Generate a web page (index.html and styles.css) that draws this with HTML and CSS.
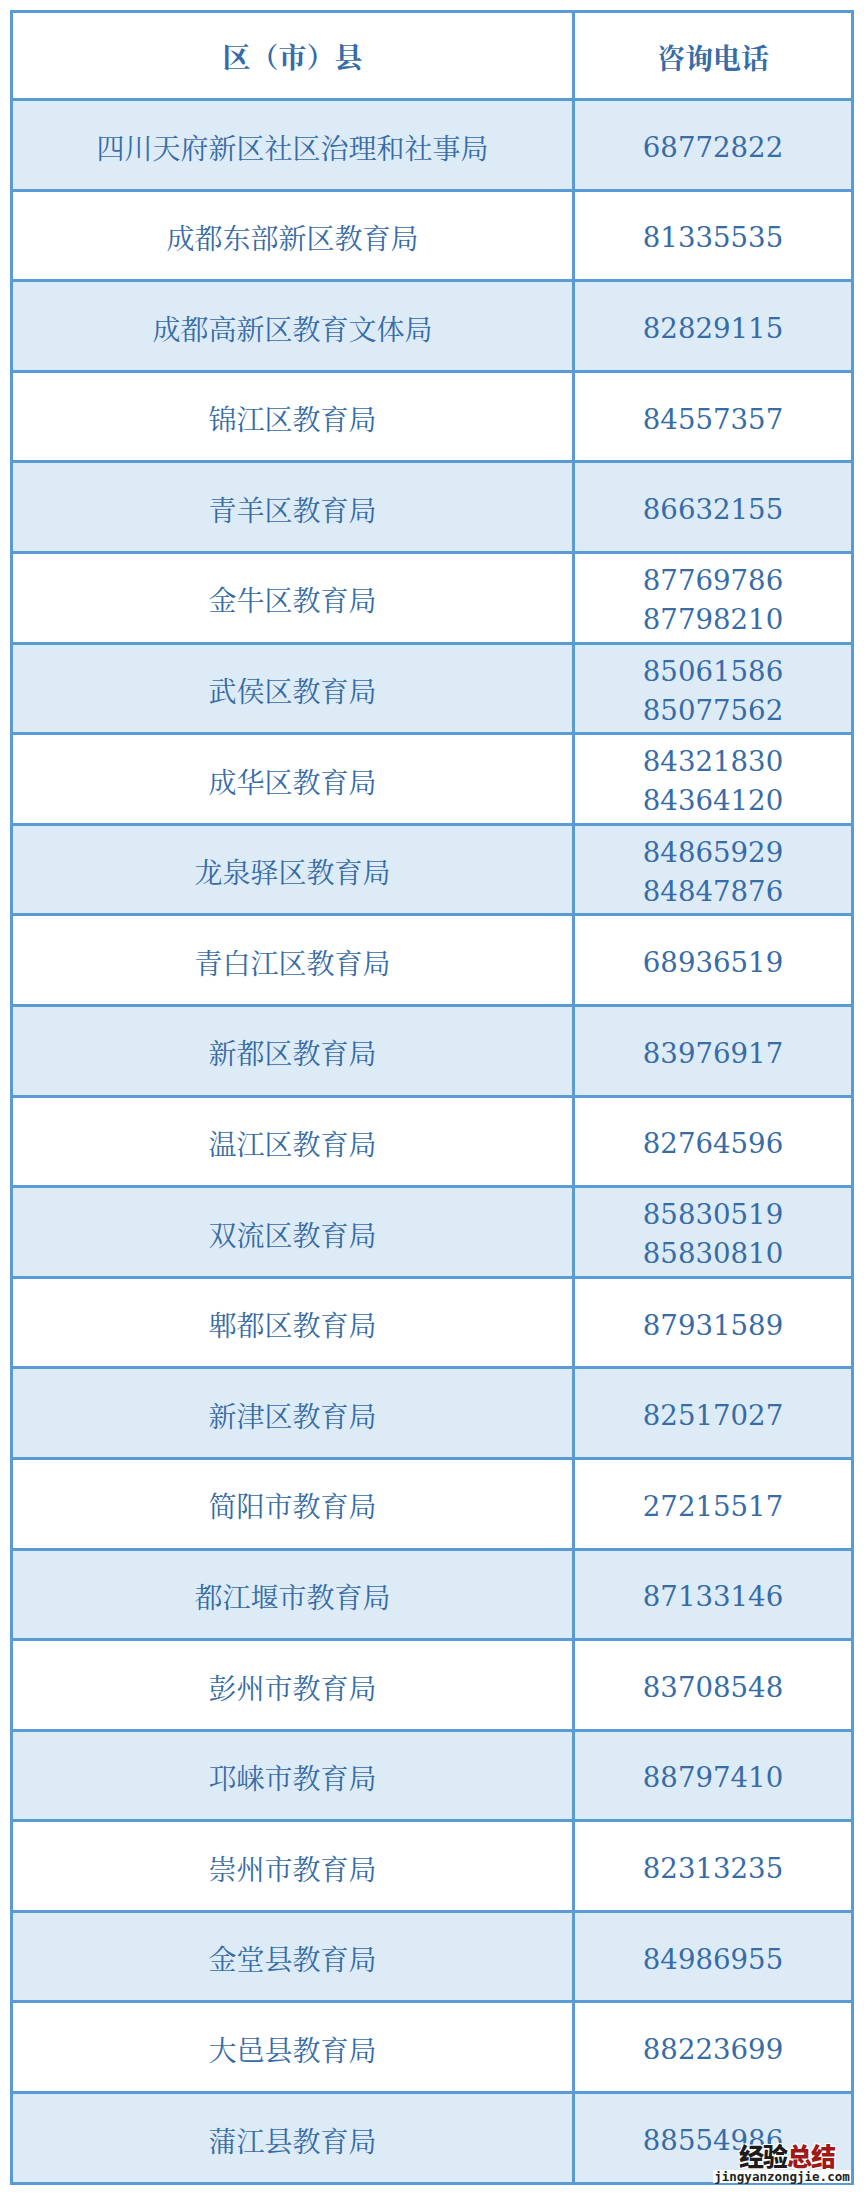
FILE: index.html
```html
<!DOCTYPE html>
<html lang="zh-CN">
<head>
<meta charset="utf-8">
<title>区（市）县 咨询电话</title>
<link rel="stylesheet" href="styles.css">
</head>
<body>
<div class="page">
  <div class="grid">
    <div class="cell head name">区（市）县</div>
    <div class="cell head tel">咨询电话</div>

    <div class="cell name fill">四川天府新区社区治理和社事局</div>
    <div class="cell tel fill">68772822</div>

    <div class="cell name">成都东部新区教育局</div>
    <div class="cell tel">81335535</div>

    <div class="cell name fill">成都高新区教育文体局</div>
    <div class="cell tel fill">82829115</div>

    <div class="cell name">锦江区教育局</div>
    <div class="cell tel">84557357</div>

    <div class="cell name fill">青羊区教育局</div>
    <div class="cell tel fill">86632155</div>

    <div class="cell name">金牛区教育局</div>
    <div class="cell tel"><span>87769786</span><span>87798210</span></div>

    <div class="cell name fill">武侯区教育局</div>
    <div class="cell tel fill"><span>85061586</span><span>85077562</span></div>

    <div class="cell name">成华区教育局</div>
    <div class="cell tel"><span>84321830</span><span>84364120</span></div>

    <div class="cell name fill">龙泉驿区教育局</div>
    <div class="cell tel fill"><span>84865929</span><span>84847876</span></div>

    <div class="cell name">青白江区教育局</div>
    <div class="cell tel">68936519</div>

    <div class="cell name fill">新都区教育局</div>
    <div class="cell tel fill">83976917</div>

    <div class="cell name">温江区教育局</div>
    <div class="cell tel">82764596</div>

    <div class="cell name fill">双流区教育局</div>
    <div class="cell tel fill"><span>85830519</span><span>85830810</span></div>

    <div class="cell name">郫都区教育局</div>
    <div class="cell tel">87931589</div>

    <div class="cell name fill">新津区教育局</div>
    <div class="cell tel fill">82517027</div>

    <div class="cell name">简阳市教育局</div>
    <div class="cell tel">27215517</div>

    <div class="cell name fill">都江堰市教育局</div>
    <div class="cell tel fill">87133146</div>

    <div class="cell name">彭州市教育局</div>
    <div class="cell tel">83708548</div>

    <div class="cell name fill">邛崃市教育局</div>
    <div class="cell tel fill">88797410</div>

    <div class="cell name">崇州市教育局</div>
    <div class="cell tel">82313235</div>

    <div class="cell name fill">金堂县教育局</div>
    <div class="cell tel fill">84986955</div>

    <div class="cell name">大邑县教育局</div>
    <div class="cell tel">88223699</div>

    <div class="cell name fill">蒲江县教育局</div>
    <div class="cell tel fill">88554986</div>
  </div>
  <div class="watermark">
    <div class="wm-title">经验<span class="wm-red">总结</span></div>
    <div class="wm-url">jingyanzongjie.com</div>
  </div>
</div>
</body>
</html>
```

FILE: styles.css
```css
html, body {
  margin: 0;
  padding: 0;
  background: #ffffff;
}

.page {
  position: relative;
  width: 864px;
  height: 2196px;
  padding: 10px;
  box-sizing: border-box;
}

.grid {
  display: grid;
  grid-template-columns: 562px 279px;
  grid-template-rows: 88px;
  grid-auto-rows: 90.6px;
  width: max-content;
  border-top: 3px solid #5b9bd5;
  border-left: 3px solid #5b9bd5;
}

.cell {
  border-right: 3px solid #5b9bd5;
  border-bottom: 3px solid #5b9bd5;
  background: #ffffff;
  color: #376ca6;
  display: flex;
  flex-direction: column;
  align-items: center;
  justify-content: center;
  padding-top: 5px;
  box-sizing: border-box;
}

.cell.fill {
  background: #ddebf7;
}

.name {
  font-family: "Noto Serif CJK SC", "Noto Sans CJK SC", serif;
  font-size: 28px;
  line-height: 1.2;
}

.tel {
  font-family: "DejaVu Serif", "Liberation Serif", serif;
  font-size: 27.6px;
  line-height: 39px;
}

.head {
  font-family: "Noto Serif CJK SC", "Noto Sans CJK SC", serif;
  font-size: 28px;
  font-weight: 700;
  padding-top: 3px;
}

.watermark {
  position: absolute;
  left: 710px;
  top: 2140px;
  width: 144px;
  display: flex;
  flex-direction: column;
  align-items: center;
}

.wm-title {
  font-family: "Noto Sans CJK SC", sans-serif;
  font-weight: 900;
  font-size: 25px;
  line-height: 30px;
  letter-spacing: -1px;
  color: #1c1c1c;
  text-shadow: 1px 1px 0 #fff, -1px -1px 0 #fff, 1px -1px 0 #fff, -1px 1px 0 #fff;
  padding-left: 10px;
}

.wm-red {
  color: #a01818;
}

.wm-url {
  font-family: "DejaVu Sans Mono", "Liberation Mono", monospace;
  font-weight: 700;
  font-size: 12.5px;
  line-height: 13px;
  color: #222222;
  background: #ffffff;
  padding: 0 1px;
}
```
